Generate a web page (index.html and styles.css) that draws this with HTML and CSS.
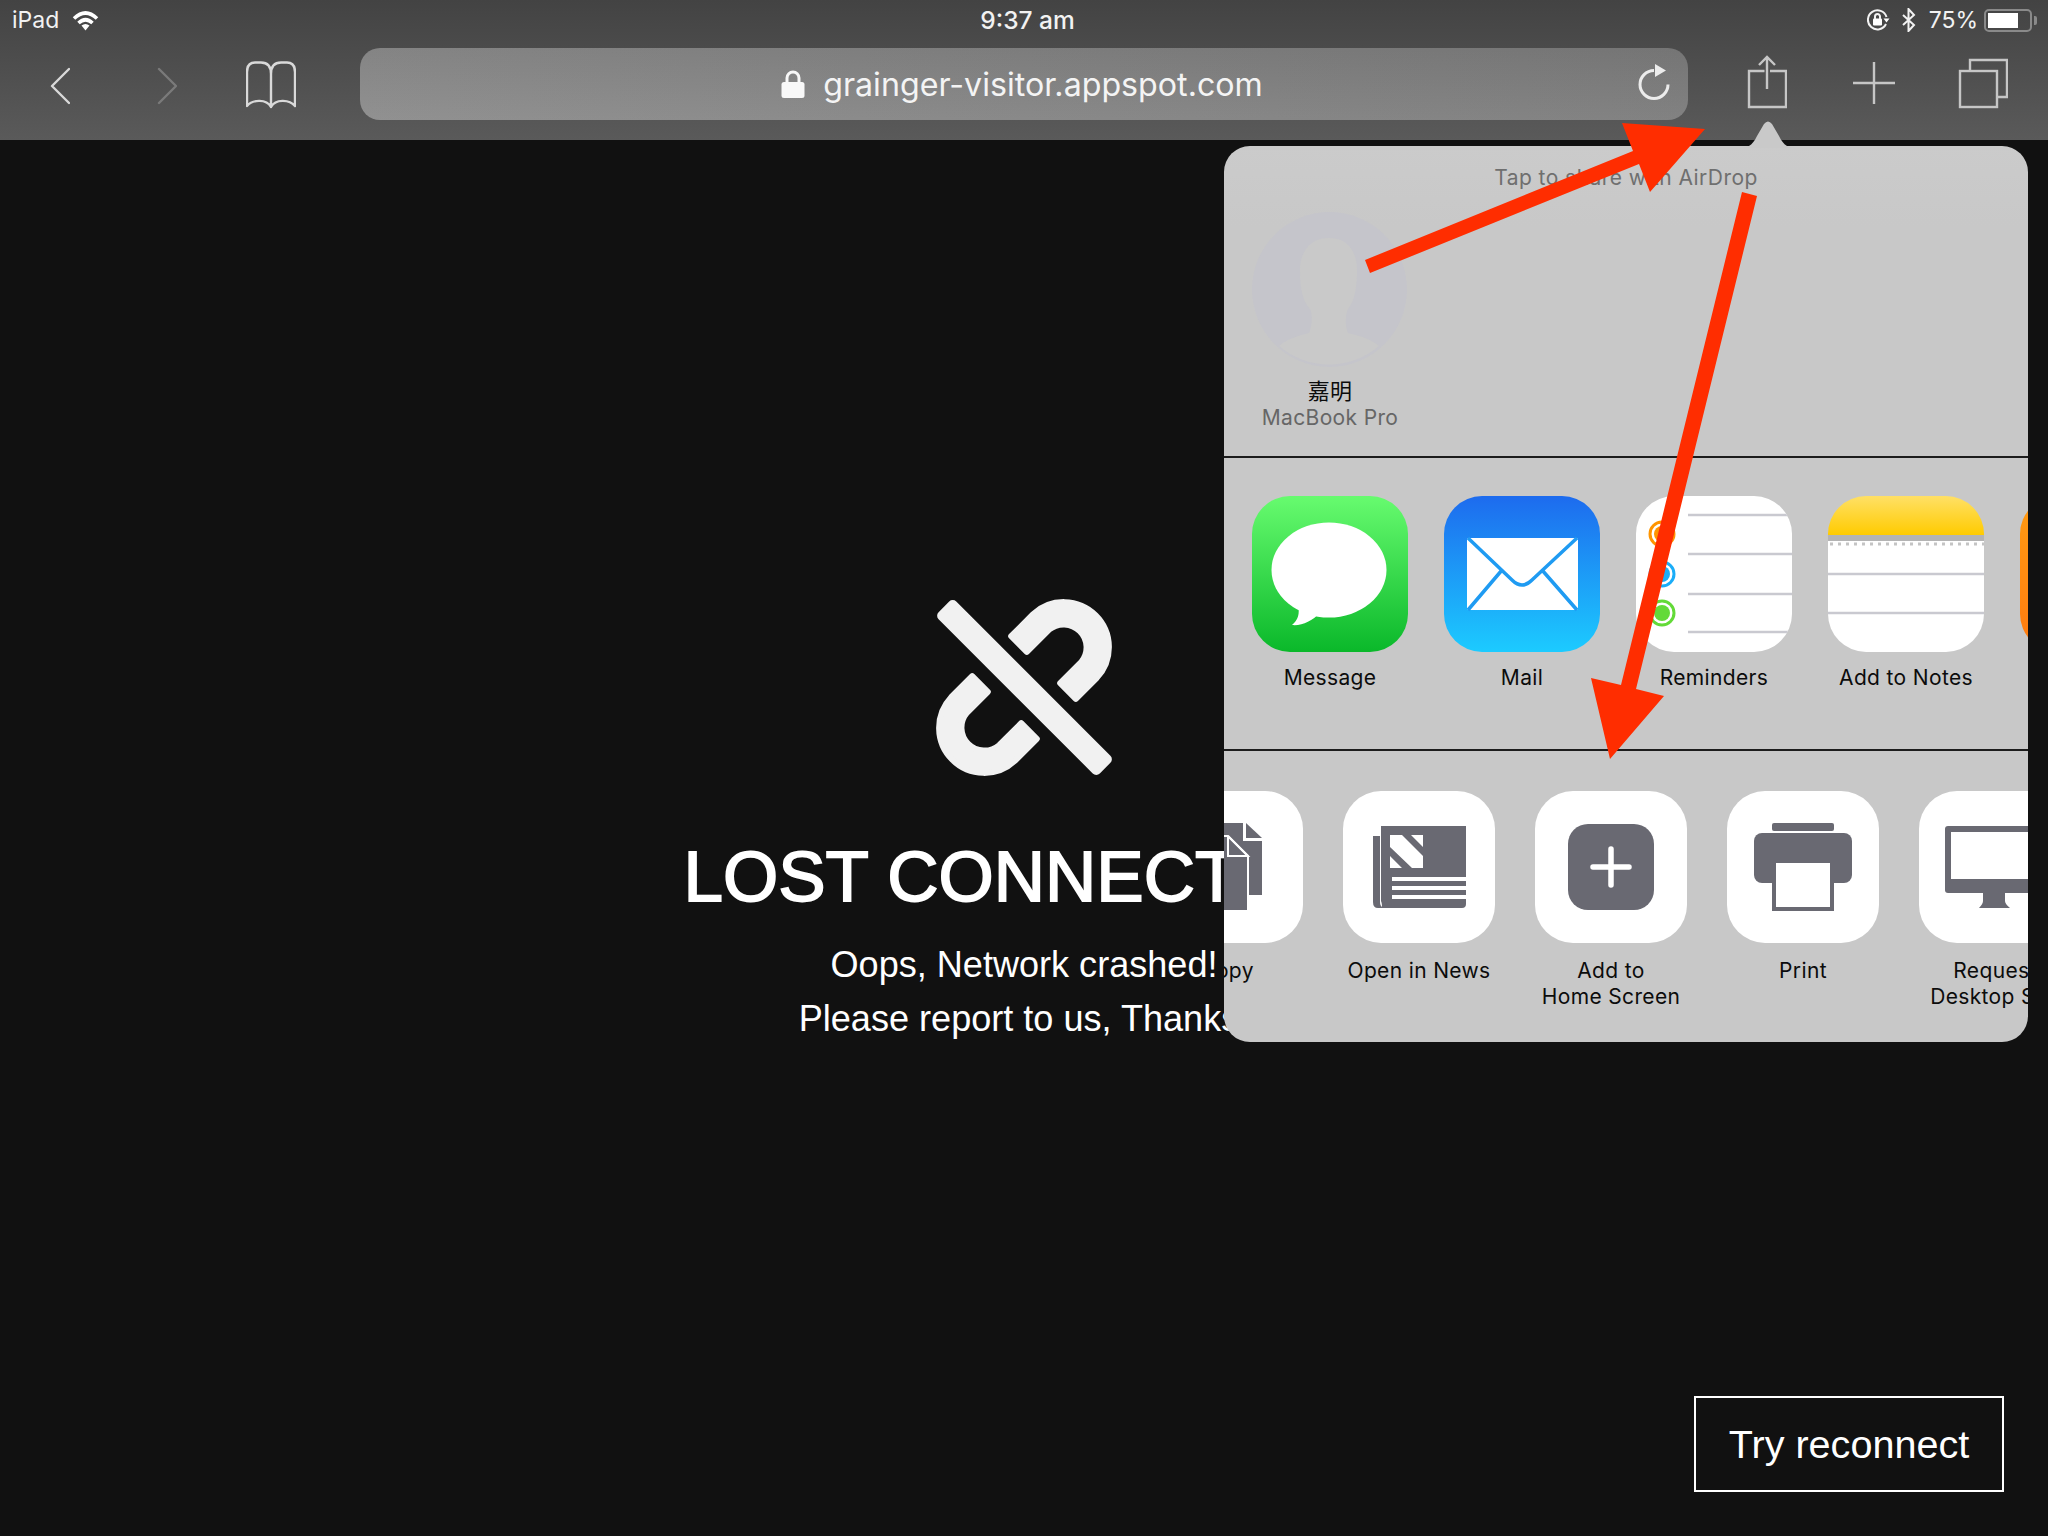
FILE: index.html
```html
<!DOCTYPE html>
<html lang="en">
<head>
<meta charset="utf-8">
<title>Lost connection</title>
<link rel="stylesheet" href="styles.css">
</head>
<body>
<div class="screen">
  <header class="toolbar">
    <div class="status">
      <div class="status-left">
        <span>iPad</span>
        <svg class="wifi" viewBox="0 0 27 21" width="27" height="21"><path class="wifi-arc" d="M2 8.5 Q13.5 -2.5 25 8.5"/><path class="wifi-arc" d="M6.5 13 Q13.5 6.5 20.5 13"/><path class="wifi-dot" d="M9.5 15.5 Q13.5 12.5 17.5 15.5 L13.5 20.5 Z"/></svg>
      </div>
      <div class="status-time">9:37 am</div>
      <div class="status-right">
        <svg class="rotlock" viewBox="0 0 23 22" width="23" height="22"><path class="thin-white" d="M19 15 A9.5 9.5 0 1 1 19.5 8"/><path class="solid-white" d="M16.5 9.5 H22.5 L19.5 13.5 Z"/><rect class="solid-white" x="6" y="9.5" width="9" height="7" rx="1"/><path class="thin-white" d="M8 10 V7.5 a2.5 2.5 0 0 1 5 0 V10"/></svg>
        <svg class="bt" viewBox="0 0 15 24" width="15" height="24"><path class="thin-white" d="M2 7 L13 17 L7.5 23 V1 L13 7 L2 17"/></svg>
        <span class="pct">75%</span>
        <div class="battery"><div class="battery-fill"></div></div>
        <div class="battery-tip"></div>
      </div>
    </div>
    <nav class="nav">
      <svg class="ic-back" viewBox="0 0 20 72" width="20" height="72"><path class="bar-line" d="M19 21 L2 38 L19 55"/></svg>
      <svg class="ic-forward" viewBox="0 0 20 72" width="20" height="72"><path class="bar-line dim" d="M2 21 L19 38 L2 55"/></svg>
      <svg class="ic-book" viewBox="0 0 50 72" width="50" height="72"><path class="bar-line" d="M25 26 C25 18 21 14.5 15 14.5 H9 C4 14.5 1 18 1 24 V58 C6 52 20 50 25 59 C30 50 44 52 49 58 V24 C49 18 46 14.5 41 14.5 H35 C29 14.5 25 18 25 26 V59"/></svg>
      <div class="urlbar">
        <span></span>
        <div class="url">
          <svg class="lock" viewBox="0 0 24 28" width="24" height="28"><rect x="0.5" y="12" width="23" height="16" rx="2.5"/><path d="M6 13 V8 a6 6 0 0 1 12 0 V13"/></svg>
          <span>grainger-visitor.appspot.com</span>
        </div>
        <svg class="reload" viewBox="0 0 34 36" width="34" height="36"><path class="reload-arc" d="M16 6.5 A14 14 0 1 0 30 20.5"/><path class="reload-head" d="M17 0 L28 6.5 L17 13 Z"/></svg>
      </div>
      <svg class="ic-share" viewBox="0 0 40 72" width="40" height="72"><path class="bar-line sharp" d="M17.5 23 H2 V59 H39 V23 H23"/><path class="bar-line sharp" d="M20 41 V9 M12 17 L20 9 L28 17"/></svg>
      <svg class="ic-plus" viewBox="0 0 42 72" width="42" height="72"><path class="bar-line sharp" d="M0 35 H42 M21 14 V56"/></svg>
      <svg class="ic-tabs" viewBox="0 0 50 72" width="50" height="72"><path class="bar-line sharp" d="M12 23 V12 H49 V49 H39"/><rect class="bar-line sharp" x="2" y="23" width="37" height="36"/></svg>
    </nav>
  </header>

  <main class="page">
    <svg class="broken-link" viewBox="935 600 177 176" width="177" height="176">
      <path class="hook" d="M1010.2 636.2 L1032.2 614.2 A45 45 0 0 1 1095.8 677.8 L1074.8 698.8 L1059.2 683.2 L1080.2 662.2 A23 23 0 0 0 1047.8 629.8 L1025.8 651.8 Z"/>
      <path class="hook" d="M1010.2 636.2 L1032.2 614.2 A45 45 0 0 1 1095.8 677.8 L1074.8 698.8 L1059.2 683.2 L1080.2 662.2 A23 23 0 0 0 1047.8 629.8 L1025.8 651.8 Z" transform="rotate(180 1023 687.5)"/>
      <rect class="slash" x="909.5" y="675" width="228" height="25" rx="5" transform="rotate(45 1023.5 687.5)"/>
    </svg>
    <h1 class="title">LOST CONNECTION</h1>
    <p class="message">Oops, Network crashed!<br>Please report to us, Thanks!</p>
    <button class="reconnect">Try reconnect</button>
  </main>

  <aside class="popover">
    <svg class="popover-tip" viewBox="0 0 60 28" width="60" height="28"><path d="M0 28 C10 28 14 26 19 16 L26 4 Q30 -1 34 4 L41 16 C46 26 50 28 60 28 Z"/></svg>
    <div class="sheet">
      <section class="airdrop">
        <div class="airdrop-title">Tap to share with AirDrop</div>
        <div class="device">
          <svg class="avatar" viewBox="0 0 156 156" width="156" height="156"><circle class="avatar-disc" cx="77.5" cy="77.5" r="77.5"/><path class="avatar-person" d="M77 26 C58 26 48 40 48 58 C48 75 50 88 58 97 C61 103 60 115 57 121 C46 124 35 127 27 134 A77 77 0 0 0 127 134 C119 127 108 124 96 121 C93 115 93 103 96 97 C103 88 105 75 105 58 C105 40 96 26 77 26 Z"/></svg>
          <div class="device-name">嘉明</div>
          <div class="device-kind">MacBook Pro</div>
        </div>
      </section>

      <section class="apps">
        <div class="item">
          <div class="app app-message"><svg viewBox="0 0 156 156" width="156" height="156"><ellipse class="white" cx="77" cy="74" rx="57.5" ry="47.5"/><path class="white" d="M46 108 C48 118 46 124 40 129 C50 130 60 125 68 117 Z"/></svg></div>
          <div class="label">Message</div>
        </div>
        <div class="item">
          <div class="app app-mail"><svg viewBox="0 0 156 156" width="156" height="156"><rect class="white" x="23" y="42" width="111" height="72" rx="2"/><path class="mail-line" d="M24 42 L68 84 Q78 94 88 84 L133 42 M58 74 L24 114 M98 74 L133 114"/></svg></div>
          <div class="label">Mail</div>
        </div>
        <div class="item">
          <div class="app app-white"><svg viewBox="0 0 156 156" width="156" height="156">
            <path class="rule" d="M52 19 H156 M52 58 H156 M52 98 H156 M52 136 H156"/>
            <circle class="ring ring-o" cx="26" cy="38" r="12"/><circle class="dot-o" cx="26" cy="38" r="8"/>
            <circle class="ring ring-b" cx="26" cy="78" r="12"/><circle class="dot-b" cx="26" cy="78" r="8"/>
            <circle class="ring ring-g" cx="26" cy="117" r="12"/><circle class="dot-g" cx="26" cy="117" r="8"/>
          </svg></div>
          <div class="label">Reminders</div>
        </div>
        <div class="item">
          <div class="app app-notes"><svg viewBox="0 0 156 156" width="156" height="156">
            <path class="note-band" d="M0 42 H156"/>
            <path class="note-dots" d="M2 48 H156"/>
            <path class="rule" d="M0 78 H156 M0 117 H156"/>
          </svg></div>
          <div class="label">Add to Notes</div>
        </div>
        <div class="item">
          <div class="app app-orange"></div>
        </div>
      </section>

      <section class="actions">
        <div class="item-small">
          <div class="action"><svg viewBox="0 0 152 152" width="152" height="152">
            <path class="glyph" d="M55 32 H92 V50 H111 V104 H55 Z"/><path class="glyph" d="M95 32 L111 47 H95 Z"/>
            <path class="glyph fold-edge" d="M41 45 H77 L97 65 V120 H41 Z"/><path class="fold-line" d="M77 45 V65 H97 L77 45"/>
          </svg></div>
          <div class="label">Copy</div>
        </div>
        <div class="item-small">
          <div class="action"><svg viewBox="0 0 152 152" width="152" height="152">
            <path class="glyph" d="M30 45 H37 V111 Q37 115 40 117 H35 Q30 117 30 111 Z"/>
            <path class="glyph" d="M38 35 H123 V113 Q123 117 119 117 H38 Q40 115 38 110 Z"/>
            <path class="white" d="M47 44 H59 L80 65 V77 H69 L47 56 Z M68 44 H80 V56 Z M47 65 V77 H59 Z"/>
            <path class="news-line" d="M49 88 H123 M49 97 H123 M49 106 H123"/>
          </svg></div>
          <div class="label">Open in News</div>
        </div>
        <div class="item-small">
          <div class="action"><svg viewBox="0 0 152 152" width="152" height="152">
            <rect class="glyph" x="33" y="33" width="86" height="86" rx="20"/>
            <path class="plus-line" d="M58 76 H94 M76 58 V94"/>
          </svg></div>
          <div class="label">Add to<br>Home Screen</div>
        </div>
        <div class="item-small">
          <div class="action"><svg viewBox="0 0 152 152" width="152" height="152">
            <rect class="glyph" x="45" y="32" width="62" height="8" rx="2"/>
            <rect class="glyph" x="27" y="42" width="98" height="50" rx="8"/>
            <rect class="glyph" x="45" y="71" width="62" height="49"/>
            <rect class="white" x="49" y="72" width="54" height="44"/>
          </svg></div>
          <div class="label">Print</div>
        </div>
        <div class="item-small">
          <div class="action"><svg viewBox="0 0 152 152" width="152" height="152">
            <rect class="glyph" x="26" y="35" width="100" height="67" rx="3"/>
            <rect class="white" x="32" y="41" width="88" height="47"/>
            <path class="glyph" d="M64 102 H86 V110 Q86 113 91 117 H60 Q64 113 64 110 Z"/>
          </svg></div>
          <div class="label">Request<br>Desktop Site</div>
        </div>
      </section>
    </div>
  </aside>

  <svg class="annotations" viewBox="0 0 2048 1536" width="2048" height="1536">
    <polygon points="1365,260 1633,151 1622,123 1705,129 1650,192 1639,164 1370,273"/>
    <polygon points="1742,192 1757,196 1636,689 1664,696 1610,759 1591,678 1621,685"/>
  </svg>
</div>
</body>
</html>
```
FILE: styles.css
```css
* { box-sizing: border-box; }
html, body { margin: 0; padding: 0; }
body { background: #111; font-family: Inter, "Noto Sans CJK SC", sans-serif; }
.screen { position: relative; width: 2048px; height: 1536px; overflow: hidden; display: flex; flex-direction: column; }

/* toolbar */
.toolbar { height: 140px; flex: none; background: linear-gradient(#434343, #5a5a5a); color: #f2f2f2; }
.status { height: 40px; display: grid; grid-template-columns: 1fr auto 1fr; align-items: center; padding: 0 11px 0 12px; font-size: 23px; }
.status-left { display: flex; align-items: center; gap: 13px; }
.status-time { font-size: 24.5px; font-weight: 500; margin-left: 6px; }
.status-right { display: flex; align-items: center; justify-content: flex-end; }
.wifi-arc { fill: none; stroke: #fff; stroke-width: 3.6; }
.wifi-dot, .solid-white { fill: #fff; }
.thin-white { fill: none; stroke: #f2f2f2; stroke-width: 2; }
.bt { margin-left: 11px; }
.pct { margin-left: 13px; }
.battery { margin-left: 6px; width: 48px; height: 23px; border: 2px solid #8a8a8a; border-radius: 5px; padding: 2px; }
.battery-fill { width: 30px; height: 100%; background: #fff; }
.battery-tip { margin-left: 2px; width: 3px; height: 9px; background: #8a8a8a; border-radius: 0 2px 2px 0; }

.nav { display: flex; align-items: center; height: 72px; margin-top: 8px; }
.bar-line { fill: none; stroke: #d9d9d9; stroke-width: 2.4; stroke-linecap: round; stroke-linejoin: round; }
.bar-line.dim { stroke: #7a7a7a; }
.bar-line.sharp { stroke: #c6c6c6; stroke-linecap: butt; stroke-linejoin: miter; }
.ic-back { margin-left: 50px; }
.ic-forward { margin-left: 87px; }
.ic-book { margin-left: 69px; }
.urlbar { margin-left: 64px; width: 1328px; height: 72px; border-radius: 20px; display: grid; grid-template-columns: 1fr auto 1fr; align-items: center; padding: 0 17px 0 0;
  background: linear-gradient(rgba(0,0,0,.05), rgba(255,255,255,.05)), linear-gradient(to right, #8b8b8b, #7b7b7b); }
.url { display: flex; align-items: center; gap: 18px; margin-left: 13px; font-size: 32.2px; color: #f4f4f4; }
.lock { fill: #f8f8f8; stroke: none; }
.lock path { fill: none; stroke: #f8f8f8; stroke-width: 3; }
.reload { justify-self: end; margin: -4px -1px 0 0; }
.reload-arc { fill: none; stroke: #ececec; stroke-width: 3; }
.reload-head { fill: #ececec; }
.ic-share { margin-left: 59px; }
.ic-plus { margin-left: 66px; }
.ic-tabs { margin-left: 63px; }

/* page */
.page { flex: 1; display: flex; flex-direction: column; align-items: center; padding-top: 460px; color: #fff; font-family: "Liberation Sans", Arial, sans-serif; }
.broken-link { flex: none; overflow: visible; }
.hook { fill: #f1f1f1; stroke: #f1f1f1; stroke-width: 6; stroke-linejoin: round; }
.slash { fill: #f1f1f1; }
.title { margin: 61px 0 0; font-size: 71px; line-height: 80px; font-weight: 400; -webkit-text-stroke: 1.8px #fff; white-space: nowrap; }
.message { margin: 21px 0 0; font-size: 36.1px; line-height: 54px; text-align: center; }
.reconnect { align-self: flex-end; margin: auto 44px 44px 0; width: 310px; height: 96px; background: transparent; border: 2px solid #fff; color: #fff; font: 39.6px "Liberation Sans", Arial, sans-serif; padding: 0; }

/* share popover */
.popover { position: absolute; left: 1224px; top: 146px; width: 804px; height: 896px; }
.popover-tip { position: absolute; left: 514px; top: -26px; fill: #c9c9c9; }
.sheet { height: 100%; border-radius: 26px; overflow: hidden; background: linear-gradient(#cbcbcb, #c8c8c8 80px); display: flex; flex-direction: column; color: #0c0c0c; font-size: 21px; letter-spacing: .35px; }
.airdrop { height: 312px; flex: none; border-bottom: 2px solid #1c1c1c; padding: 17px 0 0 28px; }
.airdrop-title { margin-left: -28px; text-align: center; line-height: 30px; color: #6f6f6f; letter-spacing: .45px; }
.device { width: 156px; margin-top: 19px; text-align: center; line-height: 26px; white-space: nowrap; }
.avatar { display: block; margin-bottom: 10px; }
.avatar-disc { fill: #c5c5cb; }
.avatar-person { fill: #c9c9c9; }
.device-name { font-size: 22px; }
.device-kind { color: #666; margin-top: 1px; }
.apps { height: 293px; flex: none; border-bottom: 2px solid #1c1c1c; display: flex; gap: 36px; padding: 38px 0 0 28px; }
.item { width: 156px; flex: none; text-align: center; }
.app { width: 156px; height: 156px; border-radius: 38px; overflow: hidden; }
.app svg { display: block; }
.label { line-height: 26px; white-space: nowrap; margin-top: 13px; }
.app-message { background: linear-gradient(#67fb6f, #0ab82a); }
.app-mail { background: linear-gradient(#1d6bee, #1ccbff); }
.app-white { background: #fff; }
.app-notes { background: linear-gradient(#ffe066, #ffcb00 39px, #fff 39px); }
.app-orange { background: linear-gradient(#ff9c12, #ff7a10); }
.white { fill: #fff; }
.mail-line { fill: none; stroke: #1f9bf2; stroke-width: 3.5; }
.rule { fill: none; stroke: #c9c9d0; stroke-width: 2.5; }
.ring { fill: #fff; stroke-width: 3; }
.ring-o { stroke: #ff9500; }
.ring-b { stroke: #1badf8; }
.ring-g { stroke: #63da38; }
.dot-o { fill: #ff9500; }
.dot-b { fill: #1badf8; }
.dot-g { fill: #63da38; }
.note-band { stroke: #b4b4b4; stroke-width: 6; fill: none; }
.note-dots { stroke: #c4c4c4; stroke-width: 3; stroke-dasharray: 3 5; fill: none; }

.actions { flex: 1; display: flex; gap: 40px; padding-top: 40px; margin-left: -73px; }
.item-small { width: 152px; flex: none; text-align: center; }
.action { width: 152px; height: 152px; border-radius: 38px; background: #fff; }
.action svg { display: block; }
.item-small .label { margin-top: 15px; }
.glyph { fill: #696972; }
.fold-edge { stroke: #fff; stroke-width: 2; }
.fold-line { fill: none; stroke: #fff; stroke-width: 2; }
.news-line { fill: none; stroke: #fff; stroke-width: 4; }
.plus-line { fill: none; stroke: #fff; stroke-width: 5.5; stroke-linecap: round; }

/* red annotation arrows */
.annotations { position: absolute; left: 0; top: 0; pointer-events: none; fill: #ff2d00; }
```
